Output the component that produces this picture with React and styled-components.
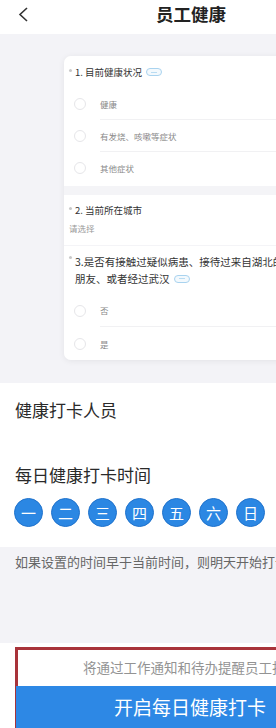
import React from "react";
import styled, { createGlobalStyle } from "styled-components";

const Global = createGlobalStyle`
  html, body { margin: 0; padding: 0; overflow: hidden; background: #f3f3f7; }
  body { font-family: "Noto Sans CJK SC", "Noto Sans", sans-serif; }
  * { box-sizing: border-box; }
`;

const Page = styled.div`
  width: 382px;
  height: 728px;
  display: flex;
  flex-direction: column;
  background: #f3f3f7;
  overflow: hidden;
`;

const Nav = styled.div`
  height: 36px;
  background: #fff;
  display: flex;
  align-items: flex-start;
  padding-top: 4px;
  position: relative;
`;

const Back = styled.div`
  width: 46px;
  padding-left: 18px;
  padding-top: 3px;
  display: flex;
`;

const Title = styled.div`
  position: absolute;
  left: 0;
  right: 0;
  top: 3px;
  text-align: center;
  font-size: 17.5px;
  font-weight: 700;
  color: #222;
  line-height: 22px;
`;

const Preview = styled.div`
  padding: 22px 64px 23px;
`;

const Card = styled.div`
  border-radius: 7px;
  overflow: hidden;
  background: #f4f4f7;
  box-shadow: 0 1px 6px rgba(0, 0, 0, 0.07);
  display: flex;
  flex-direction: column;
`;

const Section = styled.div`
  background: #fff;
  padding: ${(p) => p.$pad || "10px 0 2px 5px"};
  margin-top: ${(p) => p.$mt || 0}px;
`;

const QTitle = styled.div`
  font-size: ${(p) => p.$size || 9.5}px;
  line-height: ${(p) => p.$lh || 12}px;
  color: #333;
  display: flex;
  flex-wrap: wrap;
  align-items: center;
  padding-right: 4px;
`;

const Dot = styled.span`
  width: 3px;
  height: 3px;
  border-radius: 50%;
  background: #c8c8c8;
  display: inline-block;
  margin-right: 3px;
  align-self: flex-start;
  margin-top: 3px;
`;

const Line = styled.span`
  white-space: nowrap;
  display: flex;
  align-items: center;
  padding-left: ${(p) => p.$indent || 0}px;
`;

const Badge = styled.span`
  display: inline-block;
  width: 16px;
  height: 8px;
  border: 1px solid #a9d3ef;
  border-radius: 5px;
  margin-left: 4px;
  background: #f3f9fd;
  position: relative;
  &::after {
    content: "";
    position: absolute;
    left: 4px;
    right: 4px;
    top: 2.5px;
    height: 1px;
    background: #b9dcf2;
  }
`;

const Spacer = styled.div`
  height: ${(p) => p.$h}px;
`;

const Option = styled.div`
  height: ${(p) => p.$h || 32}px;
  display: flex;
  align-items: center;
  padding-left: 5px;
`;

const Radio = styled.span`
  width: 12px;
  height: 12px;
  border-radius: 50%;
  border: 1px solid #e6e6e9;
  margin-right: 14px;
  flex-shrink: 0;
`;

const OptText = styled.div`
  flex: 1;
  height: 100%;
  display: flex;
  align-items: center;
  font-size: 8.5px;
  color: #8a8a8a;
  border-bottom: ${(p) => (p.$last ? "none" : "1px solid #f1f1f3")};
`;

const Placeholder = styled.div`
  font-size: 8.5px;
  color: #9a9a9a;
  line-height: 12px;
  margin-top: 6px;
`;

const WhiteBlock = styled.div`
  background: #fff;
  padding: 15px 15px 20px;
`;

const Label = styled.div`
  font-size: 17px;
  color: #2a2a2a;
  line-height: 24px;
  margin-top: ${(p) => p.$mt || 0}px;
`;

const Days = styled.div`
  display: flex;
  gap: 8px;
  margin-top: 11px;
  margin-left: -1px;
`;

const Day = styled.div`
  width: 29px;
  height: 29px;
  border-radius: 50%;
  background: #2b87e3;
  border: 1.5px solid #1f72cc;
  color: #fff;
  font-size: 15px;
  display: flex;
  align-items: center;
  justify-content: center;
  line-height: 1;
`;

const Note = styled.div`
  height: 100px;
  padding: 6px 15px 0;
  font-size: 13px;
  color: #666;
  line-height: 18px;
  white-space: nowrap;
`;

const Footer = styled.div`
  flex: 1;
  background: #fff;
  padding: 4px 15px 0;
  display: flex;
`;

const RedBox = styled.div`
  flex: 1;
  border: 3px solid #a8333a;
  border-bottom: none;
  display: flex;
  flex-direction: column;
`;

const Hint = styled.div`
  height: 36px;
  text-align: center;
  font-size: 13.5px;
  color: #939393;
  line-height: 34px;
  white-space: nowrap;
`;

const Button = styled.div`
  flex: 1;
  background: #2d88e5;
  color: #fff;
  font-size: 19px;
  text-align: center;
  line-height: 42px;
  margin-left: -2px;
  white-space: nowrap;
`;

const days = ["一", "二", "三", "四", "五", "六", "日"];

export default function App() {
  return (
    <>
      <Global />
      <Page>
        <Nav>
          <Back>
            <svg width="11" height="15" viewBox="0 0 11 15">
              <polyline points="9,1 2,7.5 9,14" fill="none" stroke="#333" strokeWidth="1.6" />
            </svg>
          </Back>
          <Title>员工健康</Title>
        </Nav>
        <Preview>
          <Card>
            <Section>
              <QTitle>
                <Dot />
                <Line>1. 目前健康状况<Badge /></Line>
              </QTitle>
              <Spacer $h={10} />
              <Option>
                <Radio />
                <OptText>健康</OptText>
              </Option>
              <Option>
                <Radio />
                <OptText>有发烧、咳嗽等症状</OptText>
              </Option>
              <Option>
                <Radio />
                <OptText $last>其他症状</OptText>
              </Option>
            </Section>
            <Section $mt={9} $pad="9px 0 11px 5px">
              <QTitle>
                <Dot />
                <Line>2. 当前所在城市</Line>
              </QTitle>
              <Placeholder>请选择</Placeholder>
            </Section>
            <Section $mt={1} $pad="7px 0 0 5px">
              <QTitle $size={10.5} $lh={17}>
                <Dot />
                <Line>3.是否有接触过疑似病患、接待过来自湖北的</Line>
                <Line $indent={6}>
                  朋友、或者经过武汉<Badge />
                </Line>
              </QTitle>
              <Spacer $h={7} />
              <Option $h={33}>
                <Radio />
                <OptText>否</OptText>
              </Option>
              <Option $h={33}>
                <Radio />
                <OptText $last>是</OptText>
              </Option>
            </Section>
          </Card>
        </Preview>
        <WhiteBlock>
          <Label>健康打卡人员</Label>
          <Label $mt={41}>每日健康打卡时间</Label>
          <Days>
            {days.map((d) => (
              <Day key={d}>{d}</Day>
            ))}
          </Days>
        </WhiteBlock>
        <Note>如果设置的时间早于当前时间，则明天开始打卡</Note>
        <Footer>
          <RedBox>
            <Hint>将通过工作通知和待办提醒员工打卡</Hint>
            <Button>开启每日健康打卡</Button>
          </RedBox>
        </Footer>
      </Page>
    </>
  );
}
